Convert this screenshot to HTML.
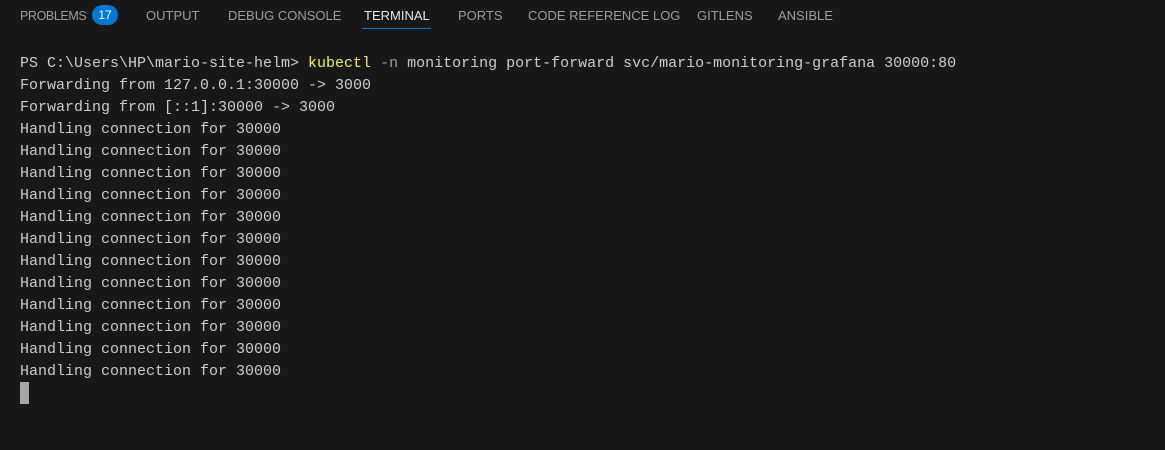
<!DOCTYPE html>
<html><head><style>
body{margin:0;width:1165px;height:450px;background:#181818;overflow:hidden;position:relative;font-family:"Liberation Sans",sans-serif}
.tab{position:absolute;top:8px;font-size:13px;color:#9d9d9d;line-height:16px;white-space:nowrap}
.act{color:#e7e7e7}
.ul{position:absolute;left:362px;top:28px;width:69px;height:1px;background:#0078d4}
.badge{position:absolute;left:92px;top:5px;width:26px;height:20px;border-radius:10px;background:#0078d4;color:#fff;font-size:12px;text-align:center;line-height:20px}
pre{position:absolute;left:20px;top:53px;margin:0;font-family:"Liberation Mono",monospace;font-size:15px;line-height:22px;color:#cccccc}
.y{color:#f1f15b}.g{color:#9d9d9d}
.cur{position:absolute;left:20px;top:382px;width:9px;height:22px;background:#a6a6a6}
</style></head><body>
<div class="tab" style="left:20px;font-size:12.5px;letter-spacing:-0.4px">PROBLEMS</div><div class="badge">17</div>
<div class="tab" style="left:146px">OUTPUT</div>
<div class="tab" style="left:228px">DEBUG CONSOLE</div>
<div class="tab act" style="left:364px">TERMINAL</div><div class="ul"></div>
<div class="tab" style="left:458px">PORTS</div>
<div class="tab" style="left:528px">CODE REFERENCE LOG</div>
<div class="tab" style="left:697px">GITLENS</div>
<div class="tab" style="left:778px">ANSIBLE</div>
<pre>PS C:\Users\HP\mario-site-helm&gt; <span class="y">kubectl</span> <span class="g">-n</span> monitoring port-forward svc/mario-monitoring-grafana 30000:80
Forwarding from 127.0.0.1:30000 -&gt; 3000
Forwarding from [::1]:30000 -&gt; 3000
Handling connection for 30000
Handling connection for 30000
Handling connection for 30000
Handling connection for 30000
Handling connection for 30000
Handling connection for 30000
Handling connection for 30000
Handling connection for 30000
Handling connection for 30000
Handling connection for 30000
Handling connection for 30000
Handling connection for 30000</pre>
<div class="cur"></div>
</body></html>
